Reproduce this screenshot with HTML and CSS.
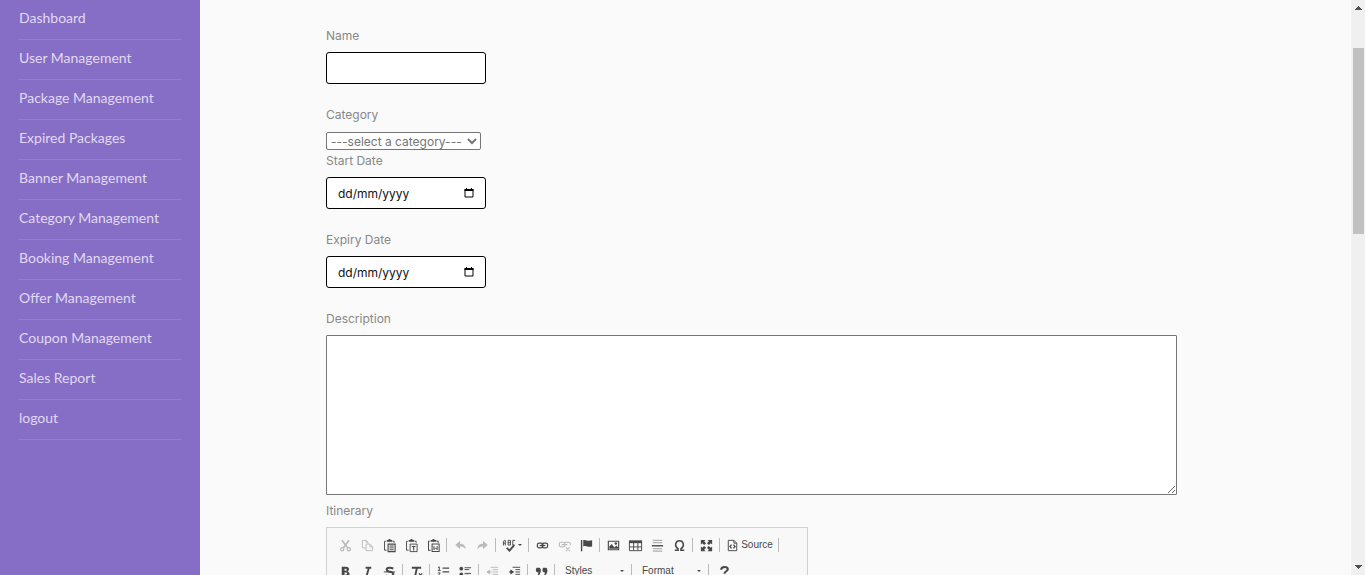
FILE: index.html
```html
<!DOCTYPE html>
<html lang="en-GB">
<head>
<meta charset="utf-8">
<title>Add Package</title>
<link rel="stylesheet" href="styles.css">
</head>
<body>
<nav class="sidebar">
  <ul class="menu">
    <li><a href="#">Dashboard</a></li>
    <li><a href="#">User Management</a></li>
    <li><a href="#">Package Management</a></li>
    <li><a href="#">Expired Packages</a></li>
    <li><a href="#">Banner Management</a></li>
    <li><a href="#">Category Management</a></li>
    <li><a href="#">Booking Management</a></li>
    <li><a href="#">Offer Management</a></li>
    <li><a href="#">Coupon Management</a></li>
    <li><a href="#">Sales Report</a></li>
    <li><a href="#">logout</a></li>
  </ul>
</nav>
<main class="content">
  <form class="form">
    <div class="field">
      <label for="name">Name</label>
      <input class="box" id="name" type="text">
    </div>
    <div class="field field-select">
      <label for="category">Category</label>
      <select id="category"><option>---select a category---</option></select>
    </div>
    <div class="field">
      <label for="start">Start Date</label>
      <div class="date">
        <input class="box" id="start" type="text" placeholder="dd/mm/yyyy">
        <button class="picker" type="button" aria-label="Pick start date"><svg viewBox="0 0 10 10"><path d="M1 1.5h8v7.5H1z" fill="none" stroke="#000"/><path d="M.5 1h9v2h-9zM2 0h1v1H2zM7 0h1v1H7z"/></svg></button>
      </div>
    </div>
    <div class="field">
      <label for="expiry">Expiry Date</label>
      <div class="date">
        <input class="box" id="expiry" type="text" placeholder="dd/mm/yyyy">
        <button class="picker" type="button" aria-label="Pick expiry date"><svg viewBox="0 0 10 10"><path d="M1 1.5h8v7.5H1z" fill="none" stroke="#000"/><path d="M.5 1h9v2h-9zM2 0h1v1H2zM7 0h1v1H7z"/></svg></button>
      </div>
    </div>
    <div class="field field-area">
      <label for="description">Description</label>
      <textarea id="description"></textarea>
    </div>
    <div class="field">
      <span class="caption">Itinerary</span>
      <div class="editor">
        <div class="bar">
          <button type="button" class="off" aria-label="Cut"><svg viewBox="0 0 16 16"><path d="M4.2 2.5l6 8M11.8 2.5l-6 8" stroke="currentColor" stroke-width="1.8"/><circle cx="4.5" cy="12" r="1.7" fill="none" stroke="currentColor" stroke-width="1.4"/><circle cx="11.5" cy="12" r="1.7" fill="none" stroke="currentColor" stroke-width="1.4"/></svg></button>
          <button type="button" class="off" aria-label="Copy"><svg viewBox="0 0 16 16" fill="none" stroke="currentColor"><path d="M6 10.500H2.500v-8h4l2 2V6M6.500 2.500v2h2M6.500 6.500h4l3 3v4h-7zM10.500 6.500v3h3"/></svg></button>
          <button type="button" aria-label="Paste"><svg viewBox="0 0 16 16"><path d="M4 3.500H2.700v9.500H5M11.500 3.500H13V5" fill="none" stroke="currentColor"/><path d="M5 2h2V1h2v1h2v2H5z"/><path d="M6.500 6.500h7.500v8H6.500z" fill="none" stroke="currentColor" stroke-width="1.200"/><path d="M8 8.500h4.500M8 10.500h4.500M8 12.500h4.500" stroke="currentColor"/></svg></button>
          <button type="button" aria-label="Paste as plain text"><svg viewBox="0 0 16 16"><path d="M4 3.500H2.700v9.500H5M11.500 3.500H13V5M6.500 6.500h7.500v8H6.500z" fill="none" stroke="currentColor"/><path d="M5 2h2V1h2v1h2v2H5z"/><path d="M8.300 9h4M10.300 9v4.300" stroke="currentColor" stroke-width="1.200"/></svg></button>
          <button type="button" aria-label="Paste from Word"><svg viewBox="0 0 16 16"><path d="M4 3.500H2.700v9.500H5M11.500 3.500H13V5M6.500 6.500h7.500v8H6.500z" fill="none" stroke="currentColor" stroke-width="1.100"/><path d="M5 2h2V1h2v1h2v2H5z"/><path d="M8.500 8.500v4l1.700-2 1.700 2v-4" fill="none" stroke="currentColor"/></svg></button>
          <span class="sep"></span>
          <button type="button" class="off" aria-label="Undo"><svg viewBox="0 0 16 16"><path d="M7.500 3v3c4 0 6 2 6 6-1.500-2-3-3-6-3v3L2.500 7.500z"/></svg></button>
          <button type="button" class="off" aria-label="Redo"><svg viewBox="0 0 16 16"><path d="M8.500 3v3c-4 0-6 2-6 6 1.500-2 3-3 6-3v3l5-4.500z"/></svg></button>
          <span class="sep"></span>
          <button type="button" class="spell" aria-label="Spell check"><svg viewBox="0 0 16 16" fill="none" stroke="currentColor"><path d="M1.500 8V3.500l1-1h1v5.500M1.500 5.500h2M6.500 2.500V7.500h2.500v-5zM6.500 5h2.500M14 2.500h-2.500v5h2"/><path d="M5 10.500l3 3 5-6" stroke-width="2"/></svg><i class="arrow"></i></button>
          <span class="sep"></span>
          <button type="button" aria-label="Link"><svg viewBox="0 0 16 16" fill="none" stroke="currentColor" stroke-width="1.300"><rect x="2.500" y="5.500" width="6" height="5" rx="2"/><rect x="7.500" y="5.500" width="6" height="5" rx="2"/><path d="M5 8h6"/></svg></button>
          <button type="button" class="off" aria-label="Unlink"><svg viewBox="0 0 16 16" fill="none" stroke="currentColor" stroke-width="1.200"><rect x="2.500" y="4.500" width="6" height="5" rx="2"/><path d="M8 5l1-.5h3a2 2 0 012 3M5 7h6M9.500 10l4 4M13.500 10l-4 4"/></svg></button>
          <button type="button" aria-label="Anchor"><svg viewBox="0 0 16 16"><path d="M2 2h1.500v12H2zM4.500 2.500C7 1 8.500 4 14 2.500V9c-5 1.500-6-1.500-9.500 0z"/></svg></button>
          <span class="sep"></span>
          <button type="button" aria-label="Image"><svg viewBox="0 0 16 16"><path d="M2.500 3.500h11v9h-11z" fill="none" stroke="currentColor" stroke-width="1.200"/><circle cx="10.500" cy="5.800" r="1.300"/><path d="M3.500 11.500V9l2.500-2.500L9 10l2-2 2 2v1.500z"/></svg></button>
          <button type="button" aria-label="Table"><svg viewBox="0 0 16 16"><path d="M1 2.500h14v3H1z"/><path d="M1.500 5v8.500h13V5M1.500 9.500h13M6 5v8M10.500 5v8" fill="none" stroke="currentColor"/></svg></button>
          <button type="button" aria-label="Horizontal line"><svg viewBox="0 0 16 16"><path d="M3 2.500h10M3 5h10M3 11.500h10M3 14h10" stroke="#999"/><path d="M2 8.300h12" stroke="currentColor" stroke-width="1.500"/></svg></button>
          <button type="button" aria-label="Special character"><svg viewBox="0 0 16 16"><path d="M3 13h3.500v-1.500C1.800 8.500 4 3 8 3s6.200 5.500 1.500 8.500V13H13" fill="none" stroke="currentColor" stroke-width="1.600"/></svg></button>
          <span class="sep"></span>
          <button type="button" aria-label="Maximize"><svg viewBox="0 0 16 16"><path d="M2 2h5L5.500 3.500 7.500 5.500l-2 2-2-2L2 7zM14 2v5l-1.500-1.500-2 2-2-2 2-2L9 2zM2 14V9l1.500 1.500 2-2 2 2-2 2L7 14zM14 14H9l1.500-1.500-2-2 2-2 2 2L14 9z"/></svg></button>
          <span class="sep"></span>
          <button type="button" class="source"><svg viewBox="0 0 16 16" fill="none" stroke="currentColor"><path d="M3.500 2.500h6l3 3v8h-9z"/><path d="M9.500 2.500v3h3"/><path d="M7 7L5.300 9 7 11M9 7l1.700 2L9 11" stroke-width="1.400"/></svg>Source</button>
          <span class="sep"></span>
        </div>
        <div class="bar">
          <button type="button" aria-label="Bold"><svg viewBox="0 0 16 16"><path d="M4 3h4.500c4 0 4 4 1.500 5 3.500 1 3 5.500-1 5.500H4zM7 5v2.300h1c1.700 0 1.700-2.300 0-2.300zm0 4v2.500h1.200c2 0 2-2.500 0-2.500z" fill-rule="evenodd"/></svg></button>
          <button type="button" aria-label="Italic"><svg viewBox="0 0 16 16"><path d="M6 4h6M4 13h6M9.500 4L7 13" fill="none" stroke="currentColor" stroke-width="2"/></svg></button>
          <button type="button" aria-label="Strikethrough"><svg viewBox="0 0 16 16"><path d="M12 5C10 3.500 5 3.300 5 6c0 3 7 1.500 7 4.500C12 14 6 13.500 4 12" fill="none" stroke="currentColor" stroke-width="2.200"/><path d="M2 8.500h12" stroke="currentColor"/></svg></button>
          <span class="sep"></span>
          <button type="button" aria-label="Remove format"><svg viewBox="0 0 16 16"><path d="M3 4h10M8.500 4L6.500 13M4 13h4" fill="none" stroke="currentColor" stroke-width="2"/><path d="M10.500 10l3.500 4M14 10l-3.500 4" stroke="currentColor" stroke-width="1.200"/></svg></button>
          <span class="sep"></span>
          <button type="button" aria-label="Numbered list"><svg viewBox="0 0 16 16" fill="none" stroke="currentColor"><path d="M7 4.500h7M7 8.500h7M7 12.500h7" stroke-width="1.300"/><path d="M2 4l1.500-1v4M2 7h3M2 9.500h2.500L2 13h3"/></svg></button>
          <button type="button" aria-label="Bulleted list"><svg viewBox="0 0 16 16"><path d="M7 4h7M7 6h5M7 10h7M7 12h5" stroke="currentColor"/><circle cx="3.500" cy="5" r="2"/><circle cx="3.500" cy="11" r="2"/></svg></button>
          <span class="sep"></span>
          <button type="button" class="off" aria-label="Decrease indent"><svg viewBox="0 0 16 16" stroke="currentColor"><path d="M6 3.500h8M8 6h6M8 8.500h6M8 11h6M6 13.500h8M3 8.500h4"/><path d="M5 6.500v4L2 8.500z"/></svg></button>
          <button type="button" aria-label="Increase indent"><svg viewBox="0 0 16 16" stroke="currentColor"><path d="M6 3.500h8M9 6h5M9 8.500h5M9 11h5M6 13.500h8M2 8.500h4"/><path d="M4 6.500v4l3-2z"/></svg></button>
          <span class="sep"></span>
          <button type="button" aria-label="Block quote"><svg viewBox="0 0 16 16"><path d="M3 4h3c2 1 2 6-2 9H3c1-1.500 2-3 1.500-4C1.500 9 1.500 5 3 4zM10 4h3c2 1 2 6-2 9h-1c1-1.500 2-3 1.500-4C8.500 9 8.500 5 10 4z"/></svg></button>
          <span class="sep"></span>
          <button type="button" class="combo">Styles<i class="arrow"></i></button>
          <span class="sep"></span>
          <button type="button" class="combo">Format<i class="arrow"></i></button>
          <span class="sep"></span>
          <button type="button" class="help" aria-label="About"><svg viewBox="0 0 16 16"><path d="M4.500 6c0-4 7-3.500 7-.5C11.500 8 8 7.500 8 10.500M8 12v2" fill="none" stroke="currentColor" stroke-width="2.200"/></svg></button>
        </div>
      </div>
    </div>
  </form>
</main>
<div class="scrollbar" aria-hidden="true">
  <svg class="tip" viewBox="0 0 7 4"><path d="M3 0h1v1h1v1h1v1h1v1H0V3h1V2h1V1h1z"/></svg>
  <div class="track"><div class="thumb"></div></div>
  <svg class="tip" viewBox="0 0 7 4"><path d="M0 0h7v1H6v1H5v1H4v1H3V3H2V2H1V1H0z"/></svg>
</div>
</body>
</html>
```

FILE: styles.css
```css
* { box-sizing: border-box; }
body {
  margin: 0;
  height: 100vh;
  display: flex;
  overflow: hidden;
  background: #fafafa;
  color: #888;
  font-family: Inter, "Liberation Sans", sans-serif;
  font-size: 12px;
}
button, input, select, textarea { font: inherit; margin: 0; }
button { border: 0; background: none; padding: 0; color: inherit; }

.sidebar { flex: none; width: 200px; padding: 0 19px; background: #866ec7; }
.menu { list-style: none; margin: 0; padding: 0; }
.menu a {
  display: block;
  padding: 7px 0 10px;
  border-bottom: 1px solid #957fcc;
  color: #e0d9f1;
  font: 14px/22px Lato, "Noto Sans", sans-serif;
  text-decoration: none;
}

.content { flex: 1; min-width: 0; padding: 27px 174px 0 126px; overflow: hidden; }
.form { display: flex; flex-direction: column; gap: 22px; }
.field { display: flex; flex-direction: column; align-items: flex-start; gap: 7px; }
.field label, .caption { line-height: 18px; }
.field-select { gap: 8px; margin-bottom: -20px; }
.field-area { margin-bottom: -15px; }
.box {
  width: 160px;
  height: 32px;
  padding: 0 11px;
  border: 1px solid #000;
  border-radius: 3px;
  background: #fff;
  color: #000;
}
.box::placeholder { color: #111; opacity: 1; }
.date { position: relative; }
.picker { position: absolute; right: 12px; top: 11px; width: 10px; height: 10px; display: flex; }
select {
  height: 18px;
  width: 155px;
  padding: 0;
  border: 1px solid #767676;
  border-radius: 2px;
  background: #fff;
  color: #757575;
}
textarea {
  width: 100%;
  height: 160px;
  border: 1px solid #767676;
  border-radius: 1px;
  background: #fff;
}

.editor {
  width: 482px;
  padding: 4px 7px;
  border: 1px solid #d1d1d1;
  background: #f8f8f8;
  color: #484848;
  font: 10px/16px "Liberation Sans", sans-serif;
}
.bar { display: flex; align-items: center; height: 26px; }
.bar button { flex: none; width: 22px; height: 20px; display: flex; align-items: center; justify-content: center; }
.bar svg { flex: none; width: 15px; height: 15px; fill: currentColor; }
.bar svg[fill="none"] { fill: none; }
.bar .off { color: #bbb; }
.bar .spell { width: 28px; gap: 1px; }
.bar .source { width: 54px; gap: 1px; }
.bar .combo { width: 72px; padding: 0 5px 0 8px; justify-content: space-between; }
.bar .help { width: 26px; }
.sep { flex: none; width: 1px; height: 14px; margin: 0 2px; background: #bbb; }
.arrow { border: 2px solid transparent; border-top-color: #484848; border-bottom: 0; }

.scrollbar {
  flex: none;
  width: 14px;
  display: flex;
  flex-direction: column;
  align-items: center;
  padding: 6px 0;
  background: #f0f0f0;
}
.tip { width: 7px; height: 4px; fill: #505050; }
.track { flex: 1; align-self: stretch; padding: 38px 1px 0 2px; }
.thumb { height: 36%; background: #c1c1c1; }
```
